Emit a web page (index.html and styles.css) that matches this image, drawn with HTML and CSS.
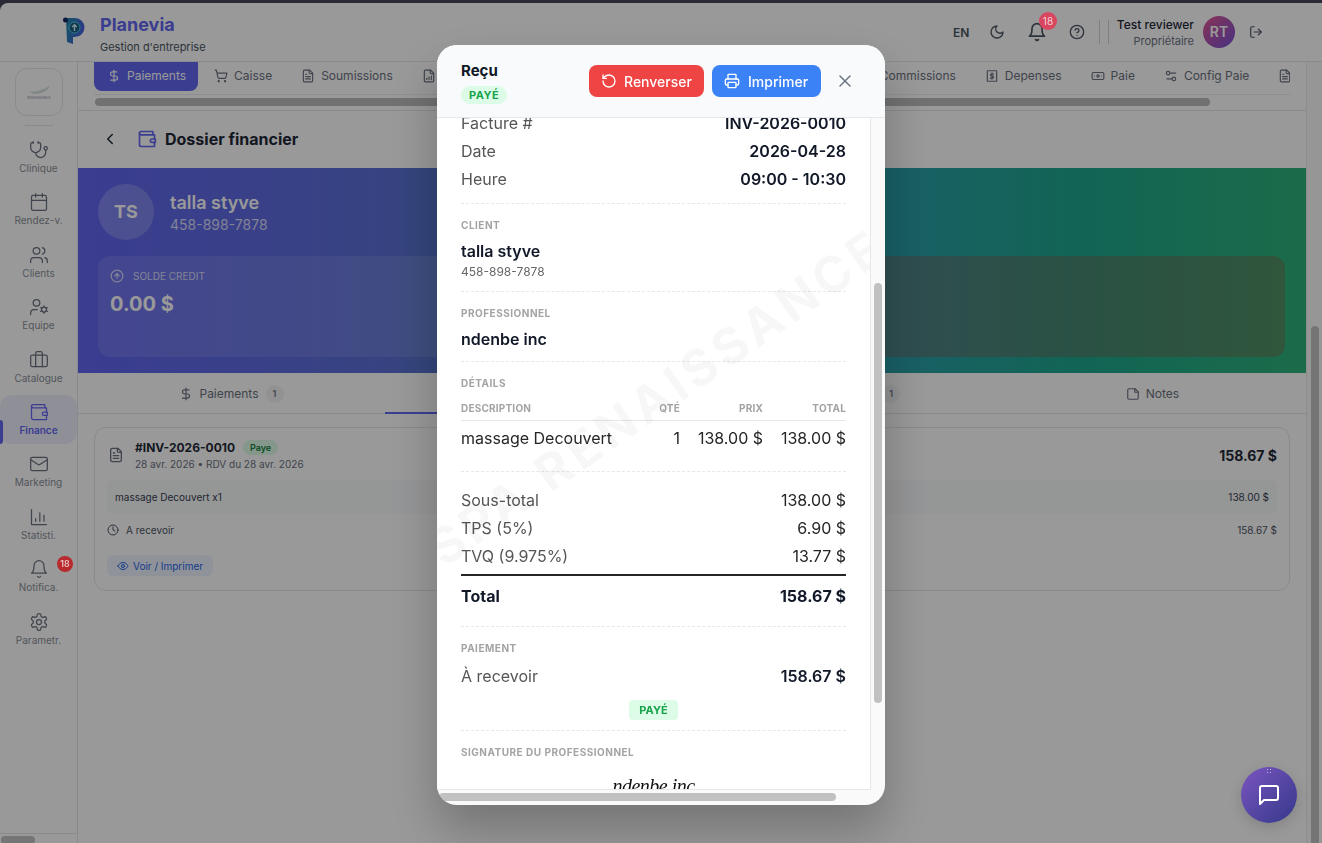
FILE: index.html
```html
<!DOCTYPE html>
<html lang="fr">
<head>
<meta charset="utf-8">
<title>Planevia</title>
<link rel="stylesheet" href="styles.css">
</head>
<body>
<svg class="defs" width="0" height="0" aria-hidden="true">
  <defs>
    <linearGradient id="logo-grad" x1="0" y1="0" x2="1" y2="0.4">
      <stop offset="0" stop-color="#1f8fa8"/>
      <stop offset="1" stop-color="#4a5fe0"/>
    </linearGradient>
  </defs>
  <symbol id="i-dollar" viewBox="0 0 24 24"><path d="M12 2v20"/><path d="M17 5H9.5a3.5 3.5 0 0 0 0 7h5a3.5 3.5 0 0 1 0 7H6"/></symbol>
  <symbol id="i-cart" viewBox="0 0 24 24"><circle cx="8" cy="21" r="1"/><circle cx="19" cy="21" r="1"/><path d="M2.05 2.05h2l2.66 12.42a2 2 0 0 0 2 1.58h9.78a2 2 0 0 0 1.95-1.57l1.65-7.43H5.12"/></symbol>
  <symbol id="i-file" viewBox="0 0 24 24"><path d="M15 2H6a2 2 0 0 0-2 2v16a2 2 0 0 0 2 2h12a2 2 0 0 0 2-2V7Z"/><path d="M14 2v4a2 2 0 0 0 2 2h4"/><path d="M10 9H8"/><path d="M16 13H8"/><path d="M16 17H8"/></symbol>
  <symbol id="i-filechart" viewBox="0 0 24 24"><path d="M15 2H6a2 2 0 0 0-2 2v16a2 2 0 0 0 2 2h12a2 2 0 0 0 2-2V7Z"/><path d="M14 2v4a2 2 0 0 0 2 2h4"/><path d="M8 18v-2"/><path d="M12 18v-4"/><path d="M16 18v-6"/></symbol>
  <symbol id="i-steth" viewBox="0 0 24 24"><path d="M11 2v2"/><path d="M5 2v2"/><path d="M5 3H4a2 2 0 0 0-2 2v4a6 6 0 0 0 12 0V5a2 2 0 0 0-2-2h-1"/><path d="M8 15a6 6 0 0 0 12 0v-3"/><circle cx="20" cy="10" r="2"/></symbol>
  <symbol id="i-cal" viewBox="0 0 24 24"><path d="M8 2v4"/><path d="M16 2v4"/><rect x="3" y="4" width="18" height="18" rx="2"/><path d="M3 10h18"/></symbol>
  <symbol id="i-users" viewBox="0 0 24 24"><path d="M16 21v-2a4 4 0 0 0-4-4H6a4 4 0 0 0-4 4v2"/><circle cx="9" cy="7" r="4"/><path d="M22 21v-2a4 4 0 0 0-3-3.87"/><path d="M16 3.13a4 4 0 0 1 0 7.75"/></symbol>
  <symbol id="i-usercog" viewBox="0 0 24 24"><path d="M10 15H6a4 4 0 0 0-4 4v2"/><circle cx="9" cy="7" r="4"/><circle cx="18" cy="15" r="3"/><path d="M18 10.5V12"/><path d="M18 18v1.500"/><path d="m14.100 12.750 1.300.750"/><path d="m20.600 16.500 1.300.750"/><path d="m14.100 17.250 1.300-.750"/><path d="m20.600 13.500 1.300-.750"/></symbol>
  <symbol id="i-brief" viewBox="0 0 24 24"><path d="M16 20V4a2 2 0 0 0-2-2h-4a2 2 0 0 0-2 2v16"/><rect x="2" y="6" width="20" height="14" rx="2"/></symbol>
  <symbol id="i-wallet" viewBox="0 0 24 24"><path d="M21 12V7H5a2 2 0 0 1 0-4h14v4"/><path d="M3 5v14a2 2 0 0 0 2 2h16v-5"/><path d="M18 12a2 2 0 0 0 0 4h4v-4Z"/></symbol>
  <symbol id="i-mail" viewBox="0 0 24 24"><rect x="2" y="4" width="20" height="16" rx="2"/><path d="m22 7-8.970 5.700a1.940 1.940 0 0 1-2.060 0L2 7"/></symbol>
  <symbol id="i-chart" viewBox="0 0 24 24"><path d="M3 3v18h18"/><path d="M8 17v-3"/><path d="M13 17V7"/><path d="M18 17v-7"/></symbol>
  <symbol id="i-bell" viewBox="0 0 24 24"><path d="M6 8a6 6 0 0 1 12 0c0 7 3 9 3 9H3s3-2 3-9"/><path d="M10.300 21a1.940 1.940 0 0 0 3.400 0"/></symbol>
  <symbol id="i-gear" viewBox="0 0 24 24"><path d="M12.220 2h-.44a2 2 0 0 0-2 2v.18a2 2 0 0 1-1 1.730l-.43.25a2 2 0 0 1-2 0l-.15-.08a2 2 0 0 0-2.730.73l-.22.38a2 2 0 0 0 .73 2.730l.15.1a2 2 0 0 1 1 1.720v.51a2 2 0 0 1-1 1.740l-.15.09a2 2 0 0 0-.73 2.730l.22.38a2 2 0 0 0 2.730.73l.15-.08a2 2 0 0 1 2 0l.43.25a2 2 0 0 1 1 1.730V20a2 2 0 0 0 2 2h.44a2 2 0 0 0 2-2v-.18a2 2 0 0 1 1-1.730l.43-.25a2 2 0 0 1 2 0l.15.08a2 2 0 0 0 2.730-.73l.22-.39a2 2 0 0 0-.73-2.730l-.15-.08a2 2 0 0 1-1-1.740v-.5a2 2 0 0 1 1-1.740l.15-.09a2 2 0 0 0 .73-2.730l-.22-.38a2 2 0 0 0-2.730-.73l-.15.08a2 2 0 0 1-2 0l-.43-.25a2 2 0 0 1-1-1.730V4a2 2 0 0 0-2-2z"/><circle cx="12" cy="12" r="3"/></symbol>
  <symbol id="i-moon" viewBox="0 0 24 24"><path d="M12 3a6 6 0 0 0 9 9 9 9 0 1 1-9-9Z"/></symbol>
  <symbol id="i-help" viewBox="0 0 24 24"><circle cx="12" cy="12" r="10"/><path d="M9.090 9a3 3 0 0 1 5.830 1c0 2-3 3-3 3"/><path d="M12 17h.01"/></symbol>
  <symbol id="i-logout" viewBox="0 0 24 24"><path d="M9 21H5a2 2 0 0 1-2-2V5a2 2 0 0 1 2-2h4"/><path d="m16 17 5-5-5-5"/><path d="M21 12H9"/></symbol>
  <symbol id="i-back" viewBox="0 0 24 24"><path d="m15 18-6-6 6-6"/></symbol>
  <symbol id="i-up" viewBox="0 0 24 24"><circle cx="12" cy="12" r="10"/><path d="m16 12-4-4-4 4"/><path d="M12 16V8"/></symbol>
  <symbol id="i-eye" viewBox="0 0 24 24"><path d="M2 12s3-7 10-7 10 7 10 7-3 7-10 7-10-7-10-7Z"/><circle cx="12" cy="12" r="3"/></symbol>
  <symbol id="i-clock" viewBox="0 0 24 24"><circle cx="12" cy="12" r="10"/><path d="M12 6v6l4 2"/></symbol>
  <symbol id="i-undo" viewBox="0 0 24 24"><path d="M3 12a9 9 0 1 0 9-9 9.750 9.750 0 0 0-6.740 2.740L3 8"/><path d="M3 3v5h5"/></symbol>
  <symbol id="i-print" viewBox="0 0 24 24"><path d="M6 18H4a2 2 0 0 1-2-2v-5a2 2 0 0 1 2-2h16a2 2 0 0 1 2 2v5a2 2 0 0 1-2 2h-2"/><path d="M6 9V3a1 1 0 0 1 1-1h10a1 1 0 0 1 1 1v6"/><rect x="6" y="14" width="12" height="8" rx="1"/></symbol>
  <symbol id="i-x" viewBox="0 0 24 24"><path d="M18 6 6 18"/><path d="m6 6 12 12"/></symbol>
  <symbol id="i-chat" viewBox="0 0 24 24"><path d="M21 15a2 2 0 0 1-2 2H7l-4 4V5a2 2 0 0 1 2-2h14a2 2 0 0 1 2 2z"/></symbol>
  <symbol id="i-note" viewBox="0 0 24 24"><path d="M15.500 3H5a2 2 0 0 0-2 2v14a2 2 0 0 0 2 2h14a2 2 0 0 0 2-2V8.500L15.500 3Z"/><path d="M15 3v6h6"/></symbol>
  <symbol id="i-bank" viewBox="0 0 24 24"><rect x="2" y="6" width="20" height="12" rx="2"/><circle cx="12" cy="12" r="2"/><path d="M6 12h.01"/><path d="M18 12h.01"/></symbol>
  <symbol id="i-receipt" viewBox="0 0 24 24"><rect x="4" y="3" width="16" height="18" rx="1"/><path d="M15 8.500h-4a1.750 1.750 0 0 0 0 3.500h2a1.750 1.750 0 0 1 0 3.500H9"/><path d="M12 6.500v11"/></symbol>
  <symbol id="i-sliders" viewBox="0 0 24 24"><path d="M20 7h-9"/><path d="M14 17H5"/><circle cx="17" cy="17" r="3"/><circle cx="7" cy="7" r="3"/></symbol>
</svg>

<div class="app">
  <div class="strip"></div>
  <header class="header">
    <div class="brand">
      <svg class="brand-logo" viewBox="0 0 22 28" aria-hidden="true">
        <path class="logo-p" d="M3 2h9a9.500 9.500 0 0 1 0 19H10v7l-6-2z"/>
        <circle class="logo-core" cx="11.500" cy="11.500" r="5.500"/>
        <path class="logo-arrow" d="M11.500 15v-6M9.200 11l2.300-2.300 2.300 2.300"/>
        <circle class="logo-dot" cx="2.500" cy="4" r="2.500"/>
      </svg>
      <div class="brand-text">
        <div class="brand-name">Planevia</div>
        <div class="brand-sub">Gestion d'entreprise</div>
      </div>
    </div>
    <div class="head-tools">
      <span class="lang">EN</span>
      <svg class="ico ico-16 tool-moon"><use href="#i-moon"/></svg>
      <span class="tool-bell">
        <svg class="ico ico-20"><use href="#i-bell"/></svg>
        <span class="bell-badge">18</span>
      </span>
      <svg class="ico ico-16 tool-help"><use href="#i-help"/></svg>
      <span class="tool-sep"></span>
      <span class="tool-sep second"></span>
      <div class="user">
        <div class="user-name">Test reviewer</div>
        <div class="user-role">Propriétaire</div>
      </div>
      <div class="user-avatar">RT</div>
      <svg class="ico ico-14 tool-logout"><use href="#i-logout"/></svg>
    </div>
  </header>

  <div class="shell">
    <aside class="sidebar">
      <div class="side-logo">
        <svg viewBox="0 0 40 24" class="side-logo-art" aria-hidden="true">
          <path d="M8 12C16 12 26 10 33 4 31 11 22 15 13 14z"/>
          <text x="20" y="20" text-anchor="middle">RENAISSANCE</text>
        </svg>
      </div>
      <div class="side-divider"></div>
      <nav class="side-nav">
        <a class="side-item"><svg class="ico ico-20"><use href="#i-steth"/></svg><span>Clinique</span></a>
        <a class="side-item"><svg class="ico ico-20"><use href="#i-cal"/></svg><span>Rendez-v.</span></a>
        <a class="side-item"><svg class="ico ico-20"><use href="#i-users"/></svg><span>Clients</span></a>
        <a class="side-item"><svg class="ico ico-20"><use href="#i-usercog"/></svg><span>Equipe</span></a>
        <a class="side-item"><svg class="ico ico-20"><use href="#i-brief"/></svg><span>Catalogue</span></a>
        <a class="side-item active"><svg class="ico ico-20"><use href="#i-wallet"/></svg><span>Finance</span></a>
        <a class="side-item"><svg class="ico ico-20"><use href="#i-mail"/></svg><span>Marketing</span></a>
        <a class="side-item"><svg class="ico ico-20"><use href="#i-chart"/></svg><span>Statisti.</span></a>
        <a class="side-item"><svg class="ico ico-20"><use href="#i-bell"/></svg><span>Notifica.</span><b class="side-badge">18</b></a>
        <a class="side-item"><svg class="ico ico-20"><use href="#i-gear"/></svg><span>Parametr.</span></a>
      </nav>
      <div class="side-scroll"><div class="side-thumb"></div></div>
    </aside>

    <main class="main">
      <div class="content">
        <div class="tabsbar">
          <div class="tabs">
            <a class="tab active"><svg class="ico ico-14"><use href="#i-dollar"/></svg>Paiements</a>
            <a class="tab"><svg class="ico ico-14"><use href="#i-cart"/></svg>Caisse</a>
            <a class="tab"><svg class="ico ico-14"><use href="#i-file"/></svg>Soumissions</a>
            <div class="tab-run">
              <a class="tab"><svg class="ico ico-14"><use href="#i-filechart"/></svg>Rapports</a>
              <a class="tab"><svg class="ico ico-14"><use href="#i-file"/></svg>Factures</a>
            </div>
            <a class="tab"><svg class="ico ico-14"><use href="#i-file"/></svg>Commissions</a>
            <a class="tab"><svg class="ico ico-14"><use href="#i-receipt"/></svg>Depenses</a>
            <a class="tab"><svg class="ico ico-14"><use href="#i-bank"/></svg>Paie</a>
            <a class="tab"><svg class="ico ico-14"><use href="#i-sliders"/></svg>Config Paie</a>
            <a class="tab tab-cut"><svg class="ico ico-14"><use href="#i-file"/></svg></a>
          </div>
          <div class="hscroll"><div class="hscroll-thumb"></div></div>
        </div>

        <div class="title-row">
          <svg class="ico ico-18 back"><use href="#i-back"/></svg>
          <svg class="ico ico-20 title-ico"><use href="#i-wallet"/></svg>
          <h1 class="title">Dossier financier</h1>
        </div>

        <section class="banner">
          <div class="client">
            <div class="client-avatar">TS</div>
            <div>
              <div class="client-name">talla styve</div>
              <div class="client-phone">458-898-7878</div>
            </div>
          </div>
          <div class="stats">
            <div class="stat">
              <div class="stat-label"><svg class="ico ico-14"><use href="#i-up"/></svg>SOLDE CREDIT</div>
              <div class="stat-value">0.00 $</div>
            </div>
            <div class="stat stat-alert"></div>
          </div>
        </section>

        <div class="subtabs">
          <a class="subtab"><svg class="ico ico-14"><use href="#i-dollar"/></svg>Paiements<b class="count">1</b></a>
          <a class="subtab current">Factures</a>
          <a class="subtab"><svg class="ico ico-14"><use href="#i-note"/></svg>Documents<b class="count">1</b></a>
          <a class="subtab"><svg class="ico ico-14"><use href="#i-note"/></svg>Notes</a>
        </div>

        <article class="invoice">
          <div class="inv-head">
            <svg class="ico ico-16 inv-ico"><use href="#i-file"/></svg>
            <div class="inv-info">
              <div class="inv-title"><strong>#INV-2026-0010</strong><span class="inv-badge">Paye</span></div>
              <div class="inv-sub">28 avr. 2026 • RDV du 28 avr. 2026</div>
            </div>
            <div class="inv-amount">158.67 $</div>
          </div>
          <div class="inv-line"><span>massage Decouvert x1</span><span>138.00 $</span></div>
          <div class="inv-pay">
            <span class="inv-pay-left"><svg class="ico ico-12"><use href="#i-clock"/></svg>A recevoir</span>
            <span>158.67 $</span>
          </div>
          <a class="inv-btn"><svg class="ico ico-12"><use href="#i-eye"/></svg>Voir / Imprimer</a>
        </article>
      </div>
      <div class="page-scroll"><div class="page-thumb"></div></div>
    </main>
  </div>
</div>

<div class="overlay">
  <div class="modal">
    <div class="modal-head">
      <div class="modal-title">
        <div class="modal-name">Reçu</div>
        <span class="paid-pill">PAYÉ</span>
      </div>
      <button class="btn btn-red"><svg class="ico ico-16"><use href="#i-undo"/></svg>Renverser</button>
      <button class="btn btn-blue"><svg class="ico ico-16"><use href="#i-print"/></svg>Imprimer</button>
      <svg class="ico ico-20 modal-close"><use href="#i-x"/></svg>
    </div>
    <div class="modal-mid">
      <div class="receipt-view">
        <div class="receipt">
          <section class="rc-sec rc-first">
            <div class="rc-row"><span>Facture #</span><b>INV-2026-0010</b></div>
            <div class="rc-row"><span>Date</span><b>2026-04-28</b></div>
            <div class="rc-row"><span>Heure</span><b>09:00 - 10:30</b></div>
          </section>
          <section class="rc-sec rc-client">
            <div class="rc-label">CLIENT</div>
            <div class="rc-strong">talla styve</div>
            <div class="rc-small">458-898-7878</div>
          </section>
          <section class="rc-sec rc-pro">
            <div class="rc-label">PROFESSIONNEL</div>
            <div class="rc-strong">ndenbe inc</div>
          </section>
          <section class="rc-sec rc-details">
            <div class="rc-label">DÉTAILS</div>
            <div class="rc-grid rc-grid-head"><span>DESCRIPTION</span><span>QTÉ</span><span>PRIX</span><span>TOTAL</span></div>
            <div class="rc-grid rc-grid-row"><span>massage Decouvert</span><span>1</span><span>138.00 $</span><span>138.00 $</span></div>
          </section>
          <section class="rc-sec rc-totals">
            <div class="rc-row rc-sum"><span>Sous-total</span><i>138.00 $</i></div>
            <div class="rc-row rc-sum"><span>TPS (5%)</span><i>6.90 $</i></div>
            <div class="rc-row rc-sum"><span>TVQ (9.975%)</span><i>13.77 $</i></div>
            <div class="rc-row rc-total"><strong>Total</strong><strong>158.67 $</strong></div>
          </section>
          <section class="rc-sec rc-payment">
            <div class="rc-label">PAIEMENT</div>
            <div class="rc-row"><span>À recevoir</span><b>158.67 $</b></div>
            <div class="rc-stamp-wrap"><span class="rc-stamp">PAYÉ</span></div>
          </section>
          <section class="rc-sec rc-sign">
            <div class="rc-label">SIGNATURE DU PROFESSIONNEL</div>
            <div class="rc-signature">ndenbe inc</div>
          </section>
        </div>
        <div class="watermark">SPA RENAISSANCE</div>
      </div>
      <div class="modal-vtrack"><div class="modal-vthumb"></div></div>
    </div>
    <div class="modal-htrack"><div class="modal-hthumb"></div></div>
  </div>
</div>

<button class="chat">
  <span class="chat-grip"></span>
  <svg class="ico ico-24"><use href="#i-chat"/></svg>
</button>
</body>
</html>
```

FILE: styles.css
```css
* { box-sizing: border-box; }
html, body { margin: 0; height: 843px; overflow: hidden; }
body {
  width: 1322px;
  font-family: "Inter", "Liberation Sans", sans-serif;
  color: #111827;
  background: #fff;
}
.defs { position: absolute; }
.ico {
  fill: none;
  stroke: currentColor;
  stroke-width: 2;
  stroke-linecap: round;
  stroke-linejoin: round;
  flex: none;
}
.ico-12 { width: 12px; height: 12px; }
.ico-14 { width: 14px; height: 14px; }
.ico-16 { width: 16px; height: 16px; }
.ico-18 { width: 18px; height: 18px; }
.ico-20 { width: 20px; height: 20px; }
.ico-24 { width: 24px; height: 24px; }

.app { display: flex; flex-direction: column; height: 843px; background: #46465c; }
.strip { height: 3px; flex: none; }

/* header */
.header {
  height: 59px;
  flex: none;
  display: flex;
  align-items: center;
  justify-content: space-between;
  padding: 0 59px 0 63px;
  background: #fff;
  border-bottom: 1px solid #e5e7eb;
  border-radius: 8px 0 0 0;
}
.brand { display: flex; align-items: center; gap: 15px; }
.brand-logo { width: 22px; height: 28px; margin-top: -5px; }
.logo-p { fill: url(#logo-grad); }
.logo-core { fill: #1a5f86; stroke: #52d0e6; stroke-width: 1; }
.logo-arrow { fill: none; stroke: #d6f3fa; stroke-width: 1.400; }
.logo-dot { fill: #14285f; }
.brand-name { font-size: 18px; font-weight: 700; line-height: 22px; color: #6366f1; margin-top: 3px; }
.brand-sub { font-size: 11px; line-height: 14px; margin-top: 4px; color: #4b5563; }
.head-tools { display: flex; align-items: center; color: #4b5563; height: 40px; }
.lang { font-size: 12px; font-weight: 600; width: 16px; }
.tool-moon { margin-left: 20px; }
.tool-bell { display: flex; margin-left: 22px; }
.bell-badge {
  position: absolute;
  z-index: 1;
  left: 1039px;
  top: 12px;
  width: 18px;
  height: 18px;
  border-radius: 50%;
  background: #d8465f;
  color: #f3d3d9;
  font-size: 10px;
  line-height: 18px;
  text-align: center;
}
.tool-help { margin-left: 22px; }
.tool-sep { width: 1px; height: 24px; background: #d1d5db; margin-left: 14px; }
.tool-sep.second { margin-left: 8px; }
.user { margin-left: 9px; width: 76px; text-align: right; white-space: nowrap; display: flex; flex-direction: column; align-items: flex-end; }
.user-name { font-size: 12px; line-height: 16px; font-weight: 500; color: #1f2937; }
.user-role { font-size: 11px; line-height: 14px; margin-top: 1px; color: #6b7280; }
.user-avatar {
  width: 32px;
  height: 32px;
  margin-left: 9px;
  border-radius: 50%;
  background: linear-gradient(135deg, #e5568f, #7453d8);
  color: #fff;
  font-size: 14px;
  font-weight: 600;
  line-height: 32px;
  text-align: center;
}
.tool-logout { margin-left: 14px; }

/* shell */
.shell { flex: 1; display: flex; min-height: 0; background: #fff; }
.sidebar {
  width: 78px;
  flex: none;
  display: flex;
  flex-direction: column;
  align-items: center;
  padding-top: 6px;
  border-right: 1px solid #e5e7eb;
  background: #fff;
}
.side-logo {
  width: 48px;
  height: 48px;
  border: 1px solid #e5e7eb;
  border-radius: 12px;
  display: flex;
  align-items: center;
  justify-content: center;
}
.side-logo-art { width: 34px; height: 20px; }
.side-logo-art path { fill: #d5e0dc; }
.side-logo-art text { font-size: 4px; font-weight: 500; fill: #9ca3af; font-family: "Inter", sans-serif; }
.side-divider { width: 28px; height: 1px; background: #e5e7eb; margin: 9px 0 7px; }
.side-nav { display: flex; flex-direction: column; gap: 3.400px; width: 100%; }
.side-item {
  height: 49px;
  display: flex;
  flex-direction: column;
  align-items: center;
  padding-top: 7px;
  color: #6b7280;
  border-radius: 12px;
}
.side-item .ico { stroke-width: 1.500; }
.side-item span { font-size: 10px; line-height: 12px; margin-top: 2px; color: #8a8f98; }
.side-item.active { position: relative; background: rgba(99, 102, 241, .1); color: #6366f1; }
.side-item.active span { color: #6366f1; font-weight: 600; }
.side-item.active::before {
  content: "";
  position: absolute;
  left: 0;
  top: 25px;
  width: 3px;
  height: 24px;
  background: #6366f1;
  border-radius: 0 3px 3px 0;
}
.side-badge {
  position: absolute;
  z-index: 1;
  left: 57px;
  top: 556px;
  width: 16px;
  height: 16px;
  border-radius: 50%;
  background: #b82a2e;
  color: #f0d4d5;
  font-size: 9px;
  font-weight: 500;
  line-height: 16px;
  text-align: center;
}
.side-scroll { margin-top: auto; width: 100%; height: 10px; border-top: 1px solid #e5e7eb; padding: 2px 1px 0; }
.side-thumb { width: 34px; height: 8px; border-radius: 4px; background: #c4c4c4; }

/* main */
.main { flex: 1; display: flex; min-width: 0; }
.content { width: 1229px; flex: none; background: #fff; border-right: 1px solid #ececec; }
.tabsbar { height: 49px; padding: 0 16px; border-bottom: 1px solid #e5e7eb; }
.tabs { display: flex; height: 33px; gap: 3px; white-space: nowrap; overflow: hidden; border-bottom: 1px solid #efefef; }
.tab {
  display: flex;
  align-items: center;
  gap: 6px;
  height: 29px;
  padding: 0 13px 2px;
  font-size: 12px;
  color: #6b7280;
  flex: none;
}
.tab.active { background: #6366f1; color: #fff; border-radius: 0 0 8px 8px; padding: 0 12px 2px 13px; }
.tab-run { width: 435px; flex: none; display: flex; overflow: hidden; gap: 3px; }
.tab-cut { padding-right: 0; }
.hscroll { padding: 3px 1px 0; }
.hscroll-thumb { width: 1115px; height: 8px; border-radius: 4px; background: #bdbdbd; }

.title-row { height: 55px; display: flex; align-items: center; padding-left: 23px; margin-bottom: 2px; }
.back { color: #1f2937; }
.title-ico { margin-left: 18px; color: #6366f1; }
.title { margin: 0 0 0 8px; font-size: 16px; line-height: 20px; font-weight: 700; color: #1f2937; }

.banner {
  height: 205px;
  padding: 16px 21px 16px 20px;
  background: linear-gradient(90deg, #6366f1 0%, #5c70d8 25%, #4b7fb8 38%, #2ba0aa 66%, #1ea98d 82%, #2eb37b 100%);
}
.client { display: flex; align-items: center; gap: 16px; height: 56px; }
.client-avatar {
  width: 56px;
  height: 56px;
  border-radius: 50%;
  background: rgba(255, 255, 255, .2);
  color: #fff;
  font-size: 18px;
  font-weight: 700;
  line-height: 56px;
  text-align: center;
}
.client-name { font-size: 18px; line-height: 24px; font-weight: 600; color: #fff; margin-top: 1px; }
.client-phone { font-size: 14px; line-height: 20px; color: rgba(255, 255, 255, .75); }
.stats { display: grid; grid-template-columns: 1fr 1fr; gap: 12px; margin-top: 16px; }
.stat { height: 101px; border-radius: 12px; background: rgba(255, 255, 255, .1); padding: 13px 12px; }
.stat-alert { background: rgba(190, 40, 30, .25); }
.stat-label { display: flex; align-items: center; gap: 9px; font-size: 10px; line-height: 14px; color: rgba(255, 255, 255, .75); }
.stat-value { margin-top: 7px; font-size: 20px; line-height: 28px; font-weight: 700; color: #fff; }

.subtabs { display: grid; grid-template-columns: repeat(4, 1fr); height: 41px; border-bottom: 1px solid #e5e7eb; }
.subtab { display: flex; align-items: center; justify-content: center; gap: 6px; font-size: 12px; color: #6b7280; }
.subtab.current { border-bottom: 2px solid #6366f1; color: #6366f1; height: 41px; }
.count {
  min-width: 18px;
  height: 18px;
  margin-left: 1px;
  border-radius: 9px;
  background: #f3f4f6;
  font-size: 9px;
  font-weight: 600;
  line-height: 18px;
  text-align: center;
}

.invoice {
  margin: 13px 16px 0;
  height: 164px;
  padding: 12px 12px 0;
  border: 1px solid #e5e7eb;
  border-radius: 12px;
}
.inv-head { display: flex; align-items: center; height: 30px; margin-bottom: 10px; }
.inv-ico { color: #6b7280; margin-left: 1px; }
.inv-info { margin-left: 11px; flex: 1; }
.inv-title { display: flex; align-items: center; gap: 8px; }
.inv-title strong { font-size: 12px; line-height: 16px; font-weight: 700; color: #1f2937; }
.inv-badge { height: 15px; padding: 0 7px; border-radius: 8px; background: #dcfce7; color: #15803d; font-size: 9px; font-weight: 600; line-height: 15px; }
.inv-sub { font-size: 10px; line-height: 14px; color: #6b7280; margin-top: 1px; }
.inv-amount { font-size: 14px; font-weight: 700; color: #1f2937; }
.inv-line {
  height: 34px;
  display: flex;
  align-items: center;
  justify-content: space-between;
  padding: 0 8px;
  font-size: 10px;
  border-radius: 6px;
  background: #f9fafb;
  color: #374151;
}
.inv-pay { height: 32px; display: flex; align-items: center; justify-content: space-between; font-size: 10px; color: #4b5563; }
.inv-pay-left { display: flex; align-items: center; gap: 7px; }
.inv-btn {
  display: inline-flex;
  align-items: center;
  gap: 4px;
  height: 21px;
  margin-top: 9px;
  padding: 0 10px;
  border-radius: 6px;
  background: #eff6ff;
  color: #2563eb;
  font-size: 10px;
}
.page-scroll { flex: 1; padding: 264px 4px 0; background: #fafafa; }
.page-thumb { height: 517px; width: 8px; border-radius: 4px 4px 0 0; background: #c4c4c4; }

/* overlay */
.overlay {
  position: fixed;
  inset: 0;
  display: flex;
  justify-content: center;
  padding-top: 45px;
  background: rgba(0, 0, 0, .4);
  backdrop-filter: blur(.5px);
}
.modal {
  width: 448px;
  height: 760px;
  display: flex;
  flex-direction: column;
  overflow: hidden;
  background: #fafafa;
  border-radius: 20px;
  box-shadow: 0 25px 50px rgba(0, 0, 0, .25);
}
.modal-head {
  height: 73px;
  flex: none;
  display: flex;
  align-items: center;
  padding: 0 30px 0 24px;
  background: #f9fafb;
  border-bottom: 1px solid #e5e7eb;
}
.modal-title { width: 128px; flex: none; padding-top: 2px; }
.modal-name { font-size: 15px; line-height: 20px; font-weight: 700; color: #111827; }
.paid-pill {
  display: block;
  width: fit-content;
  height: 18px;
  margin-top: 5px;
  padding: 0 8px;
  border-radius: 9px;
  background: #dcfce7;
  color: #16a34a;
  font-size: 11px;
  font-weight: 700;
  line-height: 18px;
  letter-spacing: .5px;
}
.btn {
  display: flex;
  align-items: center;
  gap: 8px;
  height: 32px;
  padding: 0 12px;
  border: 0;
  border-radius: 8px;
  font-family: inherit;
  font-size: 14px;
  font-weight: 500;
  color: #fff;
}
.btn-red { background: #ef4444; width: 115px; gap: 7px; }
.btn-blue { background: #3b82f6; width: 109px; margin-left: 8px; }
.modal-close { margin-left: 14px; color: #6b7280; stroke-width: 1.800; }
.modal-mid { flex: 1; display: flex; min-height: 0; }
.receipt-view { position: relative; width: 434px; flex: none; overflow: hidden; background: #fff; border-right: 1px solid #e5e7eb; border-bottom: 1px solid #e5e7eb; }
.receipt { margin-top: -9px; padding: 0 24px; }
.rc-sec { border-bottom: 1px dashed #e5e7eb; }
.rc-first { padding-bottom: 10px; }
.rc-client { padding: 14px 0 11px; }
.rc-pro { padding: 14px 0 8px; }
.rc-details { padding: 14px 0 16px; }
.rc-totals { padding: 14px 0 16px; }
.rc-payment { padding: 14px 0 10px; }
.rc-sign { padding-top: 14px; border-bottom: 0; }
.rc-row { display: flex; justify-content: space-between; font-size: 16px; line-height: 28px; color: #555; }
.rc-row b { font-weight: 600; color: #111827; }
.rc-row i { font-style: normal; color: #262626; }
.rc-label { font-size: 10px; line-height: 14px; font-weight: 700; letter-spacing: .5px; color: #a3a3a3; }
.rc-strong { font-size: 16px; line-height: 28px; font-weight: 600; margin-top: 5px; color: #111827; }
.rc-small { font-size: 12px; line-height: 16px; margin-top: -1px; color: #666; }
.rc-grid { display: grid; grid-template-columns: 1fr 40px 83px 83px; align-items: center; }
.rc-grid span:not(:first-child) { text-align: right; }
.rc-grid-head {
  height: 31px;
  padding-top: 6px;
  font-size: 10px;
  font-weight: 700;
  letter-spacing: .2px;
  color: #a3a3a3;
  border-bottom: 1px solid #e5e7eb;
}
.rc-grid-row { height: 34px; font-size: 16px; color: #262626; }
.rc-total { margin-top: 4px; padding-top: 6px; border-top: 2px solid #262626; }
.rc-total strong { font-weight: 700; color: #111827; }
.rc-payment .rc-row { margin-top: 7px; }
.rc-stamp-wrap { display: flex; justify-content: center; margin-top: 10px; }
.rc-stamp {
  height: 20px;
  padding: 0 10px;
  border-radius: 4px;
  background: #dcfce7;
  color: #16a34a;
  font-size: 11px;
  font-weight: 700;
  line-height: 20px;
}
.rc-signature {
  margin-top: 14px;
  text-align: center;
  font-family: "Liberation Serif", serif;
  font-style: italic;
  font-size: 20px;
  line-height: 26px;
  letter-spacing: -.5px;
  color: #111;
}
.watermark {
  position: absolute;
  left: 220px;
  top: 279px;
  transform: translate(-50%, -50%) rotate(-35deg);
  white-space: nowrap;
  font-size: 50px;
  font-weight: 700;
  letter-spacing: 5px;
  color: rgba(0, 0, 0, .03);
  pointer-events: none;
}
.modal-vtrack { flex: 1; padding: 165px 3px 0; }
.modal-vthumb { width: 8px; height: 420px; border-radius: 4px; background: #c1c1c1; }
.modal-htrack { height: 15px; flex: none; padding: 3px 2px 0; }
.modal-hthumb { width: 397px; height: 8px; border-radius: 4px; background: #c1c1c1; }

/* chat */
.chat {
  position: fixed;
  left: 1241px;
  top: 767px;
  width: 56px;
  height: 56px;
  padding: 0;
  border: 0;
  border-radius: 50%;
  display: flex;
  align-items: center;
  justify-content: center;
  color: #fff;
  background: linear-gradient(135deg, #7c55c0, #33388a);
  box-shadow: 0 4px 14px rgba(0, 0, 0, .15);
}
.chat-grip {
  position: absolute;
  left: 25px;
  top: 1px;
  width: 6px;
  height: 7px;
  background-image: radial-gradient(circle, rgba(255, 255, 255, .6) 0.8px, transparent 1px);
  background-size: 3px 3px;
}
```
